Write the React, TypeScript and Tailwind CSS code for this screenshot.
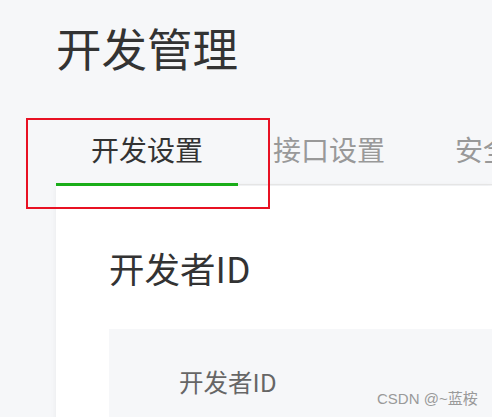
export default function App() {
  return (
    <div className="relative h-[417px] w-[492px] overflow-hidden bg-[#f6f7f9] font-['Noto_Sans_CJK_SC','Noto_Sans',sans-serif]">
      <div className="pl-[56px]">
        {/* Page title */}
        <h1 className="h-[95px] text-[45.5px] leading-[95px] font-normal text-[#333]">开发管理</h1>

        {/* Tabs */}
        <div className="flex w-max items-start">
          <div className="w-[182px] shrink-0 border-b-[3px] border-[#1aad19] pt-[40px] pb-[20px] text-center text-[28px] leading-[28px] text-[#333]">
            开发设置
          </div>
          <div className="w-[182px] shrink-0 border-b border-[#e5e5e5] pt-[40px] pb-[21px] text-center text-[28px] leading-[28px] text-[#999]">
            接口设置
          </div>
          <div className="w-[182px] shrink-0 border-b border-[#e5e5e5] pt-[40px] pb-[21px] text-center text-[28px] leading-[28px] text-[#999]">
            安全设置
          </div>
        </div>

        {/* Card */}
        <div className="h-[300px] bg-white pt-[64px] pl-[53px] shadow-[0_0_6px_rgba(0,0,0,0.06)]">
          <h2 className="text-[35.5px] leading-[35px] font-normal text-[#333]">开发者ID</h2>
          <div className="mt-[44px] h-[120px] bg-[#f6f7f9] pt-[41px] pl-[70px]">
            <p className="text-[24.5px] leading-[24px] text-[#666]">开发者ID</p>
          </div>
        </div>
      </div>

      {/* annotation box */}
      <div className="absolute top-[118px] left-[26px] h-[91px] w-[244px] border-2 border-[#e81123]" />

      {/* watermark */}
      <div className="absolute top-[390px] left-[377px] font-['Liberation_Sans','Noto_Sans_CJK_SC',sans-serif] text-[15px] leading-[18px] text-[#9a9a9a]">
        CSDN @~蓝桉
      </div>
    </div>
  )
}
